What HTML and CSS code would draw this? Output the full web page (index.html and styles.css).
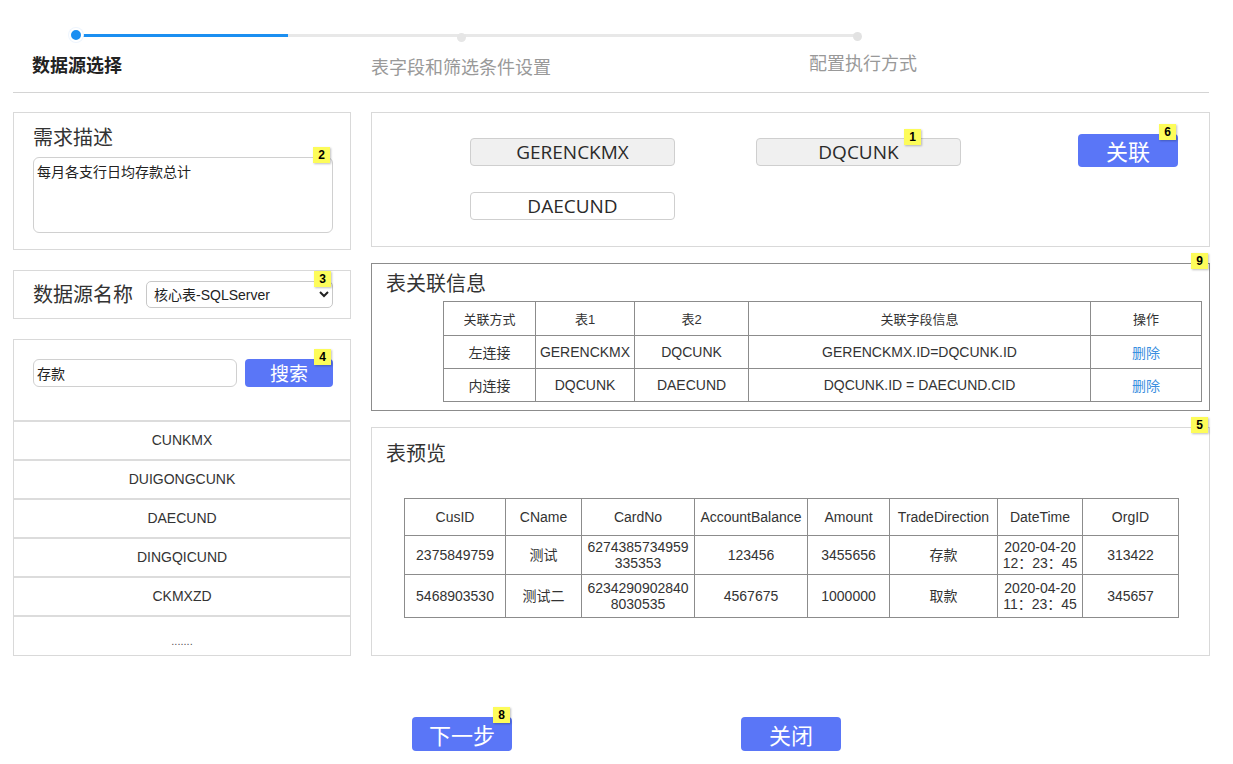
FILE: index.html
```html
<!DOCTYPE html>
<html lang="zh">
<head>
<meta charset="utf-8">
<title>数据源选择</title>
<link rel="stylesheet" href="styles.css">
</head>
<body>
<div class="page">
  <header class="header">
    <div class="track">
      <div class="track-fill"></div>
      <span class="dot dot-active"></span>
      <span class="dot dot-mid"></span>
      <span class="dot dot-end"></span>
    </div>
    <div class="step-labels">
      <div class="step step1">数据源选择</div>
      <div class="step step2">表字段和筛选条件设置</div>
      <div class="step step3">配置执行方式</div>
    </div>
  </header>

  <main class="main">
    <div class="left">
      <section class="box box-desc">
        <div class="title">需求描述</div>
        <div class="field">
          <textarea class="desc-input">每月各支行日均存款总计</textarea>
          <span class="badge">2</span>
        </div>
      </section>

      <section class="box box-source">
        <div class="title">数据源名称</div>
        <div class="field">
          <select class="source-select"><option>核心表-SQLServer</option></select>
          <span class="badge">3</span>
        </div>
      </section>

      <section class="box box-search">
        <div class="search-row">
          <input class="search-input" type="text" value="存款">
          <div class="field">
            <button class="btn btn-search">搜索</button>
            <span class="badge">4</span>
          </div>
        </div>
        <ul class="table-list">
          <li>CUNKMX</li>
          <li>DUIGONGCUNK</li>
          <li>DAECUND</li>
          <li>DINGQICUND</li>
          <li>CKMXZD</li>
          <li class="more">.......</li>
        </ul>
      </section>
    </div>

    <div class="right">
      <section class="box box-tables">
        <div class="chips">
          <div class="chip">GERENCKMX</div>
          <div class="chip field">DQCUNK<span class="badge badge-chip">1</span></div>
          <div class="chip chip-white">DAECUND</div>
        </div>
        <div class="field btn-join-wrap">
          <button class="btn btn-join">关联</button>
          <span class="badge">6</span>
        </div>
      </section>

      <section class="box box-relation">
        <span class="badge">9</span>
        <div class="title">表关联信息</div>
        <table class="rel-table">
          <colgroup>
            <col style="width:92px"><col style="width:99px"><col style="width:114px"><col style="width:342px"><col style="width:111px">
          </colgroup>
          <tr class="r-head"><td>关联方式</td><td>表1</td><td>表2</td><td>关联字段信息</td><td>操作</td></tr>
          <tr><td>左连接</td><td>GERENCKMX</td><td>DQCUNK</td><td>GERENCKMX.ID=DQCUNK.ID</td><td><a class="link">删除</a></td></tr>
          <tr><td>内连接</td><td>DQCUNK</td><td>DAECUND</td><td>DQCUNK.ID = DAECUND.CID</td><td><a class="link">删除</a></td></tr>
        </table>
      </section>

      <section class="box box-preview">
        <span class="badge">5</span>
        <div class="title">表预览</div>
        <table class="pre-table">
          <colgroup>
            <col style="width:101px"><col style="width:76px"><col style="width:113px"><col style="width:113px"><col style="width:82px"><col style="width:108px"><col style="width:85px"><col style="width:96px">
          </colgroup>
          <tr class="p-head"><td>CusID</td><td>CName</td><td>CardNo</td><td>AccountBalance</td><td>Amount</td><td>TradeDirection</td><td>DateTime</td><td>OrgID</td></tr>
          <tr class="p-row1"><td>2375849759</td><td>测试</td><td>6274385734959<br>335353</td><td>123456</td><td>3455656</td><td>存款</td><td>2020-04-20<br>12：23：45</td><td>313422</td></tr>
          <tr class="p-row2"><td>5468903530</td><td>测试二</td><td>6234290902840<br>8030535</td><td>4567675</td><td>1000000</td><td>取款</td><td>2020-04-20<br>11：23：45</td><td>345657</td></tr>
        </table>
      </section>
    </div>
  </main>

  <footer class="footer">
    <div class="field">
      <button class="btn btn-foot">下一步</button>
      <span class="badge">8</span>
    </div>
    <button class="btn btn-foot">关闭</button>
  </footer>
</div>
</body>
</html>
```

FILE: styles.css
```css
* { box-sizing: border-box; }
html, body { margin: 0; padding: 0; background: #fff; }
body {
  font-family: "Liberation Sans", "Noto Sans CJK SC", sans-serif;
  color: #333;
  width: 1233px;
}

.header {
  margin: 0 24px 0 13px;
  height: 93px;
  border-bottom: 1px solid #d4d4d4;
  padding-top: 34px;
}
.track {
  position: relative;
  margin-left: 63px;
  width: 782px;
  height: 3px;
  background: #e8e8e8;
  top: 0;
}
.track-fill {
  width: 212px;
  height: 3px;
  background: #1b8ff1;
}
.dot {
  position: absolute;
  border-radius: 50%;
}
.dot-active {
  left: -7px; top: -6px;
  width: 14px; height: 14px;
  background: #1b8ff1;
  border: 2px solid #fff;
  box-shadow: 0 0 0 1px #eef5fd;
}
.dot-mid {
  left: 381px; top: -1px;
  width: 9px; height: 9px;
  background: #e6e6e6;
}
.dot-end {
  left: 777px; top: -2px;
  width: 9px; height: 9px;
  background: #e2e2e2;
}
.step-labels {
  display: flex;
  padding-left: 19px;
  margin-top: 17px;
}
.step { font-size: 18px; line-height: 25px; }
.step1 { width: 339px; font-weight: bold; color: #222; }
.step2 { width: 438px; color: #999; margin-top: 2px; }
.step3 { color: #999; margin-top: -2px; }

.main {
  display: flex;
  gap: 20px;
  margin: 19px 0 0 13px;
}
.left { width: 338px; display: flex; flex-direction: column; gap: 20px; }
.right { width: 839px; display: flex; flex-direction: column; gap: 16px; }

.box {
  border: 1px solid #d9d9d9;
  position: relative;
}
.title { font-size: 20px; line-height: 28px; color: #333; }
.field { position: relative; }
.badge {
  position: absolute;
  top: -10px;
  right: 2px;
  width: 17px;
  height: 16px;
  background: #fdfc5a;
  color: #000;
  font-family: "Liberation Sans", sans-serif;
  font-weight: bold;
  font-size: 12px;
  line-height: 16px;
  text-align: center;
  box-shadow: 1px 1px 2px rgba(0,0,0,0.25);
  z-index: 2;
}

.box-desc { height: 138px; padding: 11px 18px 0 19px; }
.box-desc .field { margin-top: 5px; }
.desc-input {
  display: block;
  width: 300px;
  height: 76px;
  border: 1px solid #d0d0d0;
  border-radius: 6px;
  resize: none;
  padding: 3px 3px;
  font-family: "Liberation Sans", "Noto Sans CJK SC", sans-serif;
  font-size: 14px;
  color: #222;
  outline: none;
}

.box-source {
  height: 49px;
  display: flex;
  align-items: center;
  padding-left: 19px;
}
.box-source .field { margin-left: 13px; }
.source-select {
  width: 187px;
  height: 27px;
  border: 1px solid #c8c8c8;
  border-radius: 5px;
  font-family: "Liberation Sans", "Noto Sans CJK SC", sans-serif;
  font-size: 14px;
  color: #222;
  background: #fff;
  padding-left: 3px;
}

.box-search { height: 317px; }
.search-row {
  display: flex;
  gap: 8px;
  padding: 19px 0 0 19px;
  height: 80px;
}
.search-input {
  width: 204px;
  height: 28px;
  border: 1px solid #d0d0d0;
  border-radius: 6px;
  padding: 0 3px;
  font-family: "Liberation Sans", "Noto Sans CJK SC", sans-serif;
  font-size: 14px;
  color: #222;
  outline: none;
}
.btn {
  border: none;
  background: #5a76f7;
  color: #fff;
  font-family: "Noto Sans CJK SC", sans-serif;
  border-radius: 4px;
  padding: 0;
  cursor: pointer;
}
.btn-search { width: 88px; height: 28px; font-size: 19px; line-height: 28px; }
.table-list {
  list-style: none;
  margin: 0;
  padding: 0;
}
.table-list li {
  height: 39px;
  border-top: 2px solid #dcdcdc;
  text-align: center;
  font-size: 14px;
  line-height: 36px;
  color: #333;
}
.table-list li.more {
  height: 38px;
  line-height: 48px;
  font-size: 11px;
  color: #555;
}

.box-tables {
  height: 135px;
  display: flex;
  align-items: flex-start;
}
.chips {
  display: grid;
  grid-template-columns: 205px 205px;
  column-gap: 81px;
  row-gap: 26px;
  margin: 25px 0 0 98px;
}
.chip {
  height: 28px;
  background: #f0f0f0;
  border: 1px solid #cfcfcf;
  border-radius: 4px;
  text-align: center;
  font-family: "Open Sans", "Liberation Sans", sans-serif;
  font-size: 19px;
  line-height: 26px;
  color: #2a2a2a;
}
.chip-white { background: #fff; }
.badge-chip { right: 39px; top: -10px; }
.btn-join-wrap { margin: 21px 31px 0 auto; }
.btn-join { width: 100px; height: 33px; font-size: 22px; line-height: 33px; }

.box-relation {
  height: 148px;
  border-color: #8c8c8c;
  padding: 6px 0 0 14px;
}
.box-relation .badge, .box-preview .badge { right: 1px; top: -11px; }
.rel-table {
  border-collapse: collapse;
  table-layout: fixed;
  margin: 3px 0 0 57px;
  width: 758px;
}
.rel-table td {
  border: 1px solid #8c8c8c;
  text-align: center;
  font-size: 14px;
  color: #333;
  padding: 0;
  height: 33px;
  white-space: nowrap;
}
.rel-table .r-head td { height: 34px; font-size: 13px; }
.link { color: #3a8fe0; }

.box-preview {
  height: 229px;
  padding: 12px 0 0 14px;
}
.pre-table {
  border-collapse: collapse;
  table-layout: fixed;
  width: 774px;
  margin: 30px 0 0 18px;
}
.pre-table td {
  border: 1px solid #8c8c8c;
  text-align: center;
  font-size: 14px;
  color: #333;
  padding: 0 1px;
  line-height: 16px;
}
.pre-table .p-head td { height: 37px; }
.pre-table .p-row1 td { height: 39px; }
.pre-table .p-row2 td { height: 43px; }

.footer {
  display: flex;
  gap: 229px;
  margin: 61px 0 0 412px;
}
.btn-foot { width: 100px; height: 34px; font-size: 22px; line-height: 34px; }
```
